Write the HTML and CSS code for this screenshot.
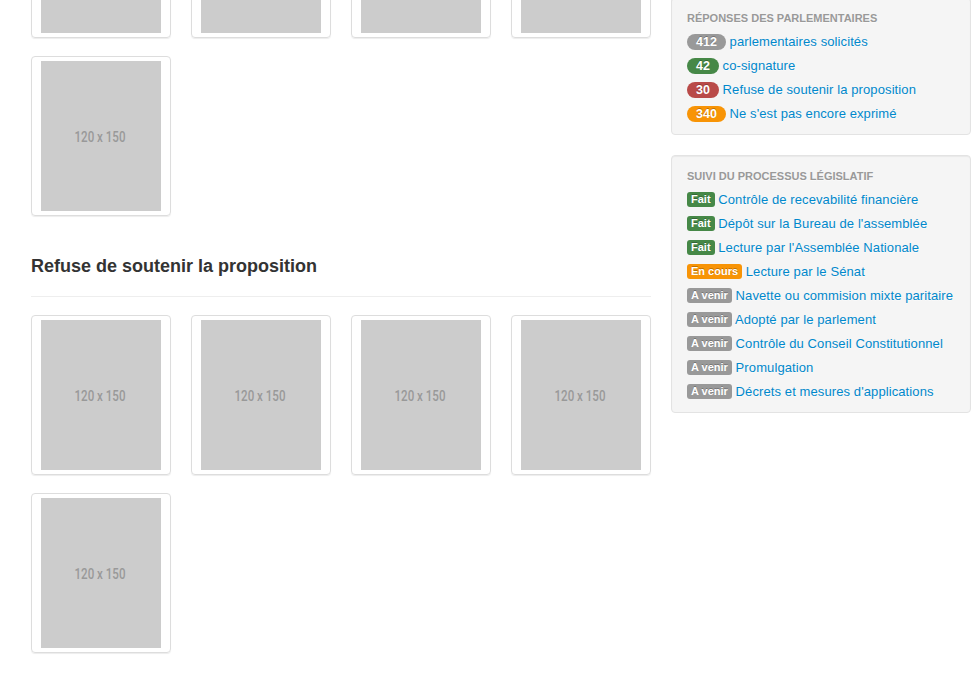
FILE: index.html
```html
<!DOCTYPE html>
<html lang="fr">
<head>
<meta charset="utf-8">
<title>Proposition</title>
<link rel="stylesheet" href="styles.css">
</head>
<body>
<div class="container">
  <div class="row">
    <div class="main">
      <ul class="thumbnails">
        <li><a class="thumbnail" href="#"><svg class="ph" width="120" height="150" viewBox="0 0 120 150"><rect width="120" height="150" fill="#ccc"/><text x="59" y="81" text-anchor="middle" textLength="51" lengthAdjust="spacingAndGlyphs">120 x 150</text></svg></a></li>
        <li><a class="thumbnail" href="#"><svg class="ph" width="120" height="150" viewBox="0 0 120 150"><rect width="120" height="150" fill="#ccc"/><text x="59" y="81" text-anchor="middle" textLength="51" lengthAdjust="spacingAndGlyphs">120 x 150</text></svg></a></li>
        <li><a class="thumbnail" href="#"><svg class="ph" width="120" height="150" viewBox="0 0 120 150"><rect width="120" height="150" fill="#ccc"/><text x="59" y="81" text-anchor="middle" textLength="51" lengthAdjust="spacingAndGlyphs">120 x 150</text></svg></a></li>
        <li><a class="thumbnail" href="#"><svg class="ph" width="120" height="150" viewBox="0 0 120 150"><rect width="120" height="150" fill="#ccc"/><text x="59" y="81" text-anchor="middle" textLength="51" lengthAdjust="spacingAndGlyphs">120 x 150</text></svg></a></li>
        <li><a class="thumbnail" href="#"><svg class="ph" width="120" height="150" viewBox="0 0 120 150"><rect width="120" height="150" fill="#ccc"/><text x="59" y="81" text-anchor="middle" textLength="51" lengthAdjust="spacingAndGlyphs">120 x 150</text></svg></a></li>
      </ul>

      <div class="page-header">
        <h3>Refuse de soutenir la proposition</h3>
      </div>

      <ul class="thumbnails">
        <li><a class="thumbnail" href="#"><svg class="ph" width="120" height="150" viewBox="0 0 120 150"><rect width="120" height="150" fill="#ccc"/><text x="59" y="81" text-anchor="middle" textLength="51" lengthAdjust="spacingAndGlyphs">120 x 150</text></svg></a></li>
        <li><a class="thumbnail" href="#"><svg class="ph" width="120" height="150" viewBox="0 0 120 150"><rect width="120" height="150" fill="#ccc"/><text x="59" y="81" text-anchor="middle" textLength="51" lengthAdjust="spacingAndGlyphs">120 x 150</text></svg></a></li>
        <li><a class="thumbnail" href="#"><svg class="ph" width="120" height="150" viewBox="0 0 120 150"><rect width="120" height="150" fill="#ccc"/><text x="59" y="81" text-anchor="middle" textLength="51" lengthAdjust="spacingAndGlyphs">120 x 150</text></svg></a></li>
        <li><a class="thumbnail" href="#"><svg class="ph" width="120" height="150" viewBox="0 0 120 150"><rect width="120" height="150" fill="#ccc"/><text x="59" y="81" text-anchor="middle" textLength="51" lengthAdjust="spacingAndGlyphs">120 x 150</text></svg></a></li>
        <li><a class="thumbnail" href="#"><svg class="ph" width="120" height="150" viewBox="0 0 120 150"><rect width="120" height="150" fill="#ccc"/><text x="59" y="81" text-anchor="middle" textLength="51" lengthAdjust="spacingAndGlyphs">120 x 150</text></svg></a></li>
      </ul>
    </div>

    <aside class="sidebar">
      <div class="well">
        <ul class="nav-list">
          <li class="nav-header">Réponses des parlementaires</li>
          <li><a href="#"><span class="badge">412</span> parlementaires solicités</a></li>
          <li><a href="#"><span class="badge badge-success">42</span> co-signature</a></li>
          <li><a href="#"><span class="badge badge-important">30</span> Refuse de soutenir la proposition</a></li>
          <li><a href="#"><span class="badge badge-warning">340</span> Ne s'est pas encore exprimé</a></li>
        </ul>
      </div>
      <div class="well">
        <ul class="nav-list">
          <li class="nav-header">Suivi du processus législatif</li>
          <li><a href="#"><span class="label label-success">Fait</span> Contrôle de recevabilité financière</a></li>
          <li><a href="#"><span class="label label-success">Fait</span> Dépôt sur la Bureau de l'assemblée</a></li>
          <li><a href="#"><span class="label label-success">Fait</span> Lecture par l'Assemblée Nationale</a></li>
          <li><a href="#"><span class="label label-warning">En cours</span> Lecture par le Sénat</a></li>
          <li><a href="#"><span class="label">A venir</span> Navette ou commision mixte paritaire</a></li>
          <li><a href="#"><span class="label">A venir</span> Adopté par le parlement</a></li>
          <li><a href="#"><span class="label">A venir</span> Contrôle du Conseil Constitutionnel</a></li>
          <li><a href="#"><span class="label">A venir</span> Promulgation</a></li>
          <li><a href="#"><span class="label">A venir</span> Décrets et mesures d'applications</a></li>
        </ul>
      </div>
    </aside>
  </div>
</div>
</body>
</html>
```

FILE: styles.css
```css
html, body {
  margin: 0;
  padding: 0;
}

body {
  font-family: "Liberation Sans", Arial, Helvetica, sans-serif;
  font-size: 13px;
  line-height: 18px;
  color: #333;
  background: #fff;
}

a {
  color: #0088cc;
  text-decoration: none;
}

.container {
  width: 940px;
  margin-left: 31px;
  margin-top: -122px;
}

.row {
  display: flex;
  align-items: flex-start;
  gap: 20px;
}

.main {
  width: 620px;
}

.sidebar {
  width: 300px;
  padding-top: 119px;
}

/* thumbnails */
.thumbnails {
  list-style: none;
  margin: 0 0 0 -20px;
  padding: 0;
  display: flex;
  flex-wrap: wrap;
}

.thumbnails li {
  width: 140px;
  margin: 0 0 18px 20px;
}

.thumbnail {
  display: block;
  padding: 4px;
  line-height: 1;
  border: 1px solid #ddd;
  border-radius: 4px;
  box-shadow: 0 1px 1px rgba(0, 0, 0, 0.075);
}

.ph {
  display: block;
  margin: 0 auto;
}

.ph text {
  font-family: Roboto, "DejaVu Sans", sans-serif;
  font-weight: 500;
  font-size: 15px;
  fill: #999;
}

/* page header */
.page-header {
  margin: 19px 0 18px;
  padding-bottom: 16px;
  border-bottom: 1px solid #eee;
}

.page-header h3 {
  margin: 0;
  font-size: 18px;
  line-height: 27px;
  font-weight: bold;
  color: #333;
}

/* wells & nav list */
.well {
  background: #f5f5f5;
  border: 1px solid #e3e3e3;
  border-radius: 4px;
  box-shadow: inset 0 1px 1px rgba(0, 0, 0, 0.05);
  padding: 8px 0;
  margin-bottom: 20px;
}

.nav-list {
  list-style: none;
  margin: 0;
  padding: 0 15px;
}

.nav-list .nav-header,
.nav-list a {
  display: block;
  padding: 3px 15px;
  margin: 0 -15px;
  line-height: 18px;
  text-shadow: 0 1px 0 rgba(255, 255, 255, 0.5);
}

.nav-list a {
  letter-spacing: 0.1px;
}

.nav-header {
  font-size: 11px;
  font-weight: bold;
  color: #999;
  text-transform: uppercase;
}

/* labels & badges */
.label,
.badge {
  display: inline-block;
  font-size: 11px;
  font-weight: bold;
  line-height: 15px;
  color: #fff;
  letter-spacing: 0;
  white-space: nowrap;
  vertical-align: 1px;
  text-shadow: 0 -1px 0 rgba(0, 0, 0, 0.25);
  background-color: #999;
}

.label {
  padding: 0 4px;
  border-radius: 3px;
}

.badge {
  font-size: 12.5px;
  line-height: 16px;
  padding: 0 9px;
  border-radius: 9px;
  vertical-align: 0;
}

.label-success,
.badge-success {
  background-color: #468847;
}

.label-warning,
.badge-warning {
  background-color: #f89406;
}

.badge-important {
  background-color: #b94a48;
}
```
